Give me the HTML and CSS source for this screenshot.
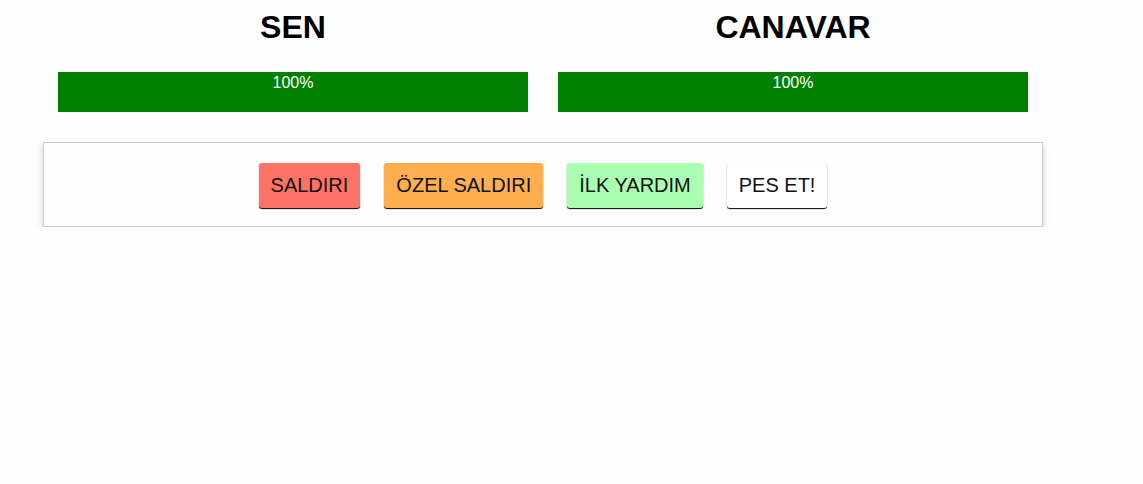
FILE: index.html
```html
<!DOCTYPE html>
<html lang="tr">
<head>
<meta charset="utf-8">
<title>Canavar Avcısı</title>
<link rel="stylesheet" href="styles.css">
</head>
<body>
<div class="app">
  <section class="players">
    <div class="player">
      <h1 class="player-name">SEN</h1>
      <div class="healthbar">
        <div class="health" style="width: 100%">100%</div>
      </div>
    </div>
    <div class="player">
      <h1 class="player-name">CANAVAR</h1>
      <div class="healthbar">
        <div class="health" style="width: 100%">100%</div>
      </div>
    </div>
  </section>
  <section class="controls">
    <button class="btn btn-attack">SALDIRI</button>
    <button class="btn btn-special">ÖZEL SALDIRI</button>
    <button class="btn btn-heal">İLK YARDIM</button>
    <button class="btn btn-giveup">PES ET!</button>
  </section>
</div>
</body>
</html>
```
FILE: styles.css
```css
html, body {
  margin: 0;
  padding: 0;
  background: #fefefe;
  font-family: "Liberation Sans", Arial, sans-serif;
}

.app {
  width: 1000px;
  margin-left: 43px;
  padding-top: 9px;
}

.players {
  display: flex;
}

.player {
  width: 500px;
  padding: 0 15px;
  box-sizing: border-box;
}

.player-name {
  margin: 0 0 26px;
  font-size: 32px;
  font-weight: bold;
  line-height: 37px;
  text-align: center;
  color: #000;
}

.healthbar {
  height: 40px;
  background: #eee;
}

.health {
  height: 40px;
  background: #008000;
  color: #fff;
  font-size: 16px;
  line-height: 22px;
  text-align: center;
}

.controls {
  margin-top: 30px;
  border: 1px solid #ccc;
  box-shadow: 0 3px 6px #ccc;
  padding: 20px 10px 18px;
  display: flex;
  justify-content: center;
  gap: 24px;
}

.btn {
  font-family: "Liberation Sans", Arial, sans-serif;
  font-size: 20px;
  line-height: 23px;
  padding: 11px 12px;
  border: none;
  border-radius: 3px;
  box-shadow: 0 1px 1px #000;
  color: #111;
  cursor: pointer;
}

.btn-attack { background: #ff7367; }
.btn-special { background: #ffaf4f; }
.btn-heal { background: #aaffb0; }
.btn-giveup { background: #ffffff; }
```
